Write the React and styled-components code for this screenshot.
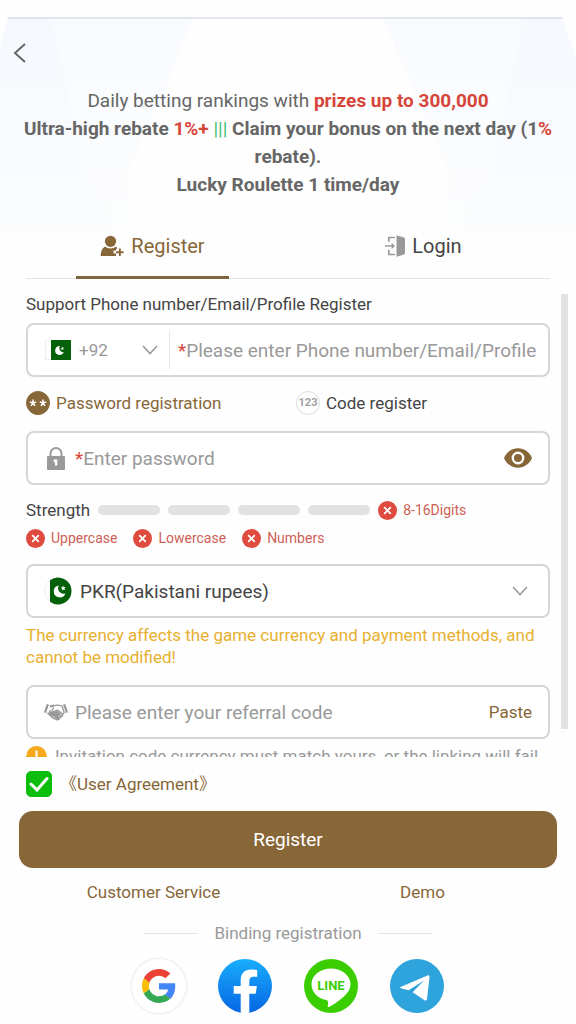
import React, { useState } from 'react';
import styled, { createGlobalStyle } from 'styled-components';

const GlobalStyle = createGlobalStyle`
  * {
    box-sizing: border-box;
  }

  body {
    margin: 0;
    background: #fefefe;
    color: #444;
    font-family: Roboto, "Noto Sans CJK SC", sans-serif;
    font-size: 17px;
  }

  button, input, select {
    font: inherit;
    color: inherit;
    margin: 0;
    padding: 0;
    border: none;
    background: none;
  }

  button, select {
    cursor: pointer;
  }

  svg {
    display: block;
    flex-shrink: 0;
  }
`;

const Page = styled.main`
  position: relative;
  display: flex;
  flex-direction: column;
  height: 100vh;
  padding-top: 18px;
`;

const Backdrop = styled.svg`
  position: absolute;
  top: 17px;
  left: 0;
  width: 100%;
  height: 260px;
  z-index: -1;
`;

const Header = styled.header`
  padding: 24px 12px 16px;
`;

const BackButton = styled.button`
  display: block;
  margin-bottom: 23px;
`;

const Promo = styled.p`
  margin: 0;
  text-align: center;
  font-size: 19px;
  line-height: 28px;
  color: #666;
`;

const Red = styled.span`
  color: #d6453a;
`;

const Green = styled.span`
  font-weight: 400;
  color: #3fbf74;
`;

const Tabs = styled.nav`
  display: flex;
  justify-content: space-between;
  margin: 0 26px;
  padding: 0 50px;
  border-bottom: 1px solid #e6e6e6;
`;

const Tab = styled.button`
  display: flex;
  align-items: center;
  justify-content: center;
  gap: 7px;
  width: 153px;
  height: 64px;
  margin-bottom: -1px;
  font-size: 20px;
  color: ${({ $active }) => ($active ? '#876638' : '#444')};
  border-bottom: 3px solid ${({ $active }) => ($active ? '#7d6540' : 'transparent')};
`;

const ScrollFrame = styled.div`
  position: relative;
  flex: 1;
  min-height: 0;
`;

const ScrollArea = styled.div`
  height: 100%;
  padding: 14px 26px 0;
  overflow-y: auto;
  scrollbar-width: none;
`;

const ScrollThumb = styled.div`
  position: absolute;
  top: 15px;
  right: 8px;
  bottom: 28px;
  width: 7px;
  background: #e2e2e2;
`;

const FieldLabel = styled.label`
  display: block;
  margin-bottom: 8px;
  line-height: 22px;
`;

const Field = styled.div`
  display: flex;
  align-items: center;
  height: 54px;
  padding: 0 16px;
  font-size: 19px;
  background: #fff;
  border: 2px solid #d6d6d6;
  border-radius: 8px;
`;

const AccountField = styled(Field)`
  padding-right: 10px;
`;

const CurrencyField = styled(Field)`
  gap: 8px;
  padding-right: 20px;
  color: #444;
`;

const FieldIcon = styled.span`
  display: flex;
  justify-content: center;
  width: 24px;
  margin-right: 7px;
`;

const TextInput = styled.input`
  flex: 1;
  min-width: 0;
  outline: none;

  &::placeholder {
    color: #999;
    opacity: 1;
  }
`;

const Required = styled.span`
  color: #d6453a;
`;

const CodePicker = styled.div`
  display: flex;
  align-items: center;
  align-self: stretch;
  gap: 8px;
  width: 126px;
  margin: 6px 8px 6px 0;
  padding-left: 1px;
  padding-right: 11px;
  color: #999;
  border-right: 1px solid #e4e4e4;
`;

const PlainSelect = styled.select`
  flex: 1;
  min-width: 0;
  appearance: none;
  outline: none;
  font-size: ${({ $size }) => $size || 19}px;
`;

const Modes = styled.div`
  display: grid;
  grid-template-columns: 1fr 1fr;
  gap: 16px;
  margin: 14px 0 16px;
`;

const ModeLabel = styled.label`
  display: flex;
  align-items: center;
  gap: 6px;
  line-height: 24px;
  color: ${({ $active }) => ($active ? '#876638' : '#444')};
`;

const Stack = styled.span`
  display: grid;
  width: ${({ $size }) => $size}px;
  height: ${({ $size }) => $size}px;

  > * {
    grid-area: 1 / 1;
    place-self: center;
    pointer-events: none;
  }

  > input {
    appearance: none;
    width: 100%;
    height: 100%;
    pointer-events: auto;
  }
`;

const ModeRadio = styled.input`
  border: 1px solid #ddd;
  border-radius: 50%;

  &:checked {
    background: #876638;
    border-color: #876638;
  }
`;

const ModeMark = styled.span`
  font-size: 11px;
  font-weight: 700;
  color: #a0a0a0;
`;

const IconButton = styled.button`
  display: flex;
  color: #876638;
`;

const Strength = styled.div`
  display: flex;
  align-items: center;
  gap: 8px;
  height: 24px;
  margin: 13px 0 6px;
`;

const Bar = styled.span`
  width: 62px;
  height: 10px;
  border-radius: 5px;
  background: #e2e2e2;
`;

const Rules = styled.div`
  display: flex;
  gap: 16px;
  margin-bottom: 16px;
`;

const RuleItem = styled.span`
  display: flex;
  align-items: center;
  gap: 6px;
  font-size: 14px;
  line-height: 20px;
  color: #cf5f55;
`;

const Warning = styled.p`
  margin: 6px 0 17px;
  line-height: 22px;
  color: #e8b030;
`;

const Hint = styled.p`
  display: flex;
  align-items: center;
  gap: 8px;
  margin: 7px 0 0;
  line-height: 20px;
  white-space: nowrap;
  color: #999;
`;

const Paste = styled.button`
  font-size: 17px;
  color: #876638;
`;

const Footer = styled.footer`
  padding: 14px 19px 11px;
`;

const Agreement = styled.div`
  display: flex;
  align-items: center;
  height: 26px;
  padding-left: 7px;
  margin-bottom: 14px;
`;

const AgreeBox = styled.input`
  border: 1px solid #bbb;
  border-radius: 5px;

  &:checked {
    background: #0cbd0c;
    border-color: #0cbd0c;
  }
`;

const TextLink = styled.a`
  color: #876638;
  text-decoration: none;
`;

const AgreementLink = styled(TextLink)`
  margin-left: 8px;
  line-height: 24px;
`;

const Submit = styled.button`
  display: block;
  width: 100%;
  height: 57px;
  font-size: 19px;
  color: #fff;
  background: #876638;
  border-radius: 14px;
`;

const Links = styled.div`
  display: grid;
  grid-template-columns: 1fr 1fr;
  margin: 12px 0 17px;
  line-height: 24px;
  text-align: center;
`;

const Binding = styled.div`
  display: flex;
  align-items: center;
  justify-content: center;
  gap: 16px;
  margin-bottom: 14px;
  line-height: 24px;
  color: #999;

  &::before,
  &::after {
    content: '';
    width: 54px;
    height: 1px;
    background: #e4e4e4;
  }
`;

const Socials = styled.div`
  display: flex;
  justify-content: center;
  gap: 32px;
`;

const SocialButton = styled.button`
  width: 54px;
  height: 54px;
  border-radius: 50%;
  box-shadow: ${({ $shadow }) => ($shadow ? '0 0 3px rgba(0, 0, 0, 0.18)' : 'none')};
`;

const UserPlusIcon = () => (
    <svg width="24" height="22" viewBox="0 0 24 22" fill="currentColor">
        <circle cx="10.5" cy="6.3" r="5.6" />
        <path d="M5 11.5c1.500 1.300 3.300 2 5.500 2s4-.7 5.300-1.900c.9.600 1.300 1.300 1.500 2.100l-1.300.300v1.600h-2.500v3h2.500V21H1.400c-.5 0-.8-.3-.7-.8.300-4.200 1.700-7.200 4.300-8.700z" />
        <path d="M18.900 13.500h1.900v2.800h2.800v1.900h-2.800V21h-1.900v-2.800h-2.800v-1.900h2.800z" />
    </svg>
);

const LoginIcon = () => (
    <svg width="20" height="22" viewBox="0 0 20 22" fill="none" stroke="#999" strokeWidth="1.700">
        <path d="M10 2.500H3.800v4.200M3.800 14.800v4.700H10M0 11h8" />
        <path d="M6.600 7.800L10 11l-3.400 3.200z" fill="#999" stroke="none" />
        <path d="M11.500.3l7 2q1.500.4 1.500 2v13.400q0 1.600-1.500 2l-7 2z" fill="#999" stroke="none" />
    </svg>
);

const ChevronIcon = () => (
    <svg width="16" height="10" viewBox="0 0 16 10" fill="none" stroke="#999" strokeWidth="1.600">
        <path d="M1 1l7 7.500L15 1" />
    </svg>
);

const FlagIcon = () => (
    <svg width="26" height="20" viewBox="0 0 26 20">
        <rect width="26" height="20" fill="#eee" />
        <rect x="1" y="1" width="5" height="18" fill="#fff" />
        <rect x="6" width="20" height="20" fill="#04610a" />
        <path d="M14.800 6a4.500 4.500 0 1 0 4 6.300 4.200 4.200 0 0 1-4-6.300z" fill="#fff" />
        <path d="M17 6.600l.7 1.200 1.400-.2-1 1 .6 1.300-1.300-.6-1 .9.200-1.400-1.200-.7 1.400-.2z" fill="#fff" />
    </svg>
);

const RoundFlagIcon = () => (
    <svg width="28" height="28" viewBox="0 0 28 28">
        <circle cx="14" cy="14" r="13.300" fill="#fff" stroke="#eee" />
        <path d="M6 3.200A13.500 13.500 0 0 1 27.500 14 13.500 13.500 0 0 1 6 24.800z" fill="#04610a" />
        <path d="M14.800 8.500a6 6 0 1 0 6.600 8 5.600 5.600 0 0 1-6.600-8z" fill="#fff" />
        <path d="M19 8.500l.8 1.700 1.900-.2-1.300 1.400.8 1.800-1.800-.8-1.400 1.300.2-2-1.600-1 1.900-.4z" fill="#fff" />
    </svg>
);

const LockIcon = () => (
    <svg width="18" height="23" viewBox="0 0 18 23">
        <path d="M3.500 10V6.500a5.500 5.500 0 0 1 11 0V10" fill="none" stroke="#999" strokeWidth="2" />
        <rect y="9" width="18" height="14" rx="1" fill="#999" />
        <path d="M6.700 12.500h3.600v6H8v-3.300H6.700z" fill="#fff" />
    </svg>
);

const EyeIcon = () => (
    <svg width="28" height="20" viewBox="0 0 28 20">
        <path d="M0 10C2.500 4 8 .3 14 .3S25.500 4 28 10c-2.500 6-8 9.700-14 9.700S2.500 16 0 10z" fill="currentColor" />
        <circle cx="14" cy="10" r="5.200" fill="currentColor" stroke="#fff" strokeWidth="2.400" />
    </svg>
);

const CrossIcon = () => (
    <svg width="19" height="19" viewBox="0 0 19 19">
        <circle cx="9.500" cy="9.500" r="9.500" fill="#e04b40" />
        <path d="M6.200 6.200l6.600 6.600M12.800 6.200l-6.600 6.600" stroke="#fff" strokeWidth="1.800" />
    </svg>
);

const HandshakeIcon = () => (
    <svg width="24" height="18" viewBox="0 0 24 18">
        <path d="M2.700 1l2.200.8L2 10 0 9.200zM21.300 1l-2.200.8L22 10l2-.8z" fill="#999" />
        <path d="M5.800 3l4-.8M3.500 9.800l5.200 5 4 1.800c2 .6 2.700-.3 2.300-1.400" fill="none" stroke="#999" strokeWidth="1.400" />
        <path d="M6.500 3.800c1.600.1 2.600-.3 3.800-1.100 2.200-1.300 4.800-.7 7.700.3l2.200 6.500-1.200 1.700-5.700-4.300-2.800 1.500c-1.500.8-3-.3-2-1.800l1.400-2" fill="none" stroke="#999" strokeWidth="1.300" />
        <path d="M13.200 7.800l5.900 4.300c.6 1.200-.5 2.200-1.600 1.700.3 1.200-.8 1.900-1.900 1.400-.2 1.200-1.200 1.600-2.300 1L6.500 12l-2-2L6 6.500c.7 2.200 2.500 3 4.500 2.400z" fill="#999" />
        <path d="M14.500 12.700l1.700 1.600M15.800 10.800l2.200 2" stroke="#fff" strokeWidth=".6" />
    </svg>
);

const AlertIcon = () => (
    <svg width="21" height="20" viewBox="0 0 21 20">
        <circle cx="10.500" cy="10.300" r="10.300" fill="#f5a81c" />
        <path d="M10.500 4.500v7M10.500 13.500v2" stroke="#fff" strokeWidth="2" />
    </svg>
);

const TickIcon = () => (
    <svg width="20" height="16" viewBox="0 0 20 16" fill="none" stroke="#fff" strokeWidth="3" strokeLinecap="round">
        <path d="M2 8l6 6L18 2.500" />
    </svg>
);

const StarsIcon = () => (
    <svg width="18" height="8" viewBox="0 0 18 8" stroke="#fff" strokeWidth="1.500">
        <path d="M4 4V.5M4 4L.7 2.900M4 4l3.300-1.100M4 4L2 6.900M4 4l2 2.900" />
        <path d="M14 4V.5M14 4l-3.300-1.100M14 4l3.300-1.100M14 4l-2 2.900M14 4l2 2.900" />
    </svg>
);

const GoogleLogo = () => (
    <svg width="54" height="54" viewBox="0 0 54 54">
        <circle cx="27" cy="27" r="27" fill="#fff" />
        <g transform="translate(10 10) scale(.708)">
            <path fill="#EA4335" d="M24 9.500c3.540 0 6.710 1.220 9.210 3.600l6.850-6.850C35.900 2.380 30.470 0 24 0 14.620 0 6.510 5.380 2.560 13.220l7.980 6.190C12.430 13.720 17.740 9.500 24 9.500z" />
            <path fill="#4285F4" d="M46.980 24.550c0-1.570-.15-3.090-.38-4.550H24v9.020h12.940c-.58 2.960-2.260 5.480-4.780 7.180l7.730 6c4.510-4.180 7.090-10.360 7.090-17.650z" />
            <path fill="#FBBC05" d="M10.530 28.590c-.48-1.450-.76-2.990-.76-4.590s.27-3.140.76-4.590l-7.980-6.190C.92 16.460 0 20.120 0 24c0 3.880.92 7.540 2.560 10.780l7.970-6.190z" />
            <path fill="#34A853" d="M24 48c6.480 0 11.930-2.130 15.890-5.810l-7.730-6c-2.150 1.450-4.920 2.300-8.160 2.300-6.260 0-11.570-4.220-13.470-9.910l-7.980 6.190C6.510 42.620 14.620 48 24 48z" />
        </g>
    </svg>
);

const FacebookLogo = () => (
    <svg width="54" height="54" viewBox="0 0 54 54">
        <defs>
            <linearGradient id="fb" x1="0" y1="0" x2="0" y2="1">
                <stop offset="0" stopColor="#19adfc" />
                <stop offset="1" stopColor="#0666e3" />
            </linearGradient>
        </defs>
        <circle cx="27" cy="27" r="27" fill="url(#fb)" />
        <path d="M22.700 53.700V34.800h-7v-7.800h7v-5.700c0-6.900 4.100-10.700 10.400-10.700 3 0 6.100.500 6.100.500v6.700h-3.400c-3.400 0-4.500 2.100-4.500 4.300V27h7.600l-1.200 7.800h-6.400v18.900c-2.900.4-5.700.4-8.600 0z" fill="#fff" />
    </svg>
);

const LineLogo = () => (
    <svg width="54" height="54" viewBox="0 0 54 54">
        <circle cx="27" cy="27" r="27" fill="#3ace01" />
        <path d="M27 9.500c10.800 0 19.500 7 19.500 15.700 0 4-2 7.500-5 10.600-4.300 5-14 11.200-16.200 12.100-2.200.9-1.500-1.300-1.300-2.700.2-1.700.4-3.800-1.800-4.300C13.700 39.600 7.500 33.100 7.500 25.200 7.500 16.500 16.200 9.500 27 9.500z" fill="#fff" />
        <text x="27" y="31" textAnchor="middle" fontFamily="Roboto, sans-serif" fontSize="13" fontWeight="700" fill="#3ace01">LINE</text>
    </svg>
);

const TelegramLogo = () => (
    <svg width="54" height="54" viewBox="0 0 54 54">
        <circle cx="27" cy="27" r="27" fill="#2ea3dc" />
        <path d="M10.500 28L37.500 16.500c1.500-.5 2.300.3 2 2L37 40c-.3 1.600-1.300 2-2.500 1.200L22.600 33.300 34 21.500 18.500 31.300 11 29.300c-.8-.3-1.200-.9-.5-1.300z" fill="#fff" />
    </svg>
);

const rules = ['Uppercase', 'Lowercase', 'Numbers'];

const socials = [
    { name: 'Google', Logo: GoogleLogo, shadow: true },
    { name: 'Facebook', Logo: FacebookLogo },
    { name: 'LINE', Logo: LineLogo },
    { name: 'Telegram', Logo: TelegramLogo },
];

const App = () => {
    const [tab, setTab] = useState('register');
    const [mode, setMode] = useState('password');
    const [showPassword, setShowPassword] = useState(false);
    const [agreed, setAgreed] = useState(true);

    return (
        <Page>
            <GlobalStyle />
            <Backdrop viewBox="0 0 576 260" preserveAspectRatio="none">
                <defs>
                    <linearGradient id="fade" gradientUnits="userSpaceOnUse" x1="0" y1="0" x2="0" y2="250">
                        <stop offset="0" stopColor="#f5f8fd" />
                        <stop offset="0.600" stopColor="#f9fbfe" />
                        <stop offset="1" stopColor="#fefefe" />
                    </linearGradient>
                </defs>
                <path d="M8 1H192L163 76 125 160 140 250H0V30z" fill="url(#fade)" />
                <path d="M383 1H562L576 40V250H436L451 160 415 76z" fill="url(#fade)" />
                <path d="M52 1L64 60 84 150 140 250 125 160 163 76 192 1z" fill="#fff" opacity="0.350" />
                <path d="M524 1L512 60 492 150 436 250 451 160 415 76 383 1z" fill="#fff" opacity="0.350" />
                <path d="M8 1H563" stroke="#e2e4ee" strokeWidth="2" />
            </Backdrop>
            <Header>
                <BackButton aria-label="Back">
                    <svg width="14" height="22" viewBox="0 0 14 22" fill="none" stroke="#666" strokeWidth="2">
                        <path d="M13 2L3 11l10 9" />
                    </svg>
                </BackButton>
                <Promo>
                    Daily betting rankings with <b><Red>prizes up to 300,000</Red></b>
                    <br />
                    <b>
                        Ultra-high rebate <Red>1%+</Red> <Green>|||</Green> Claim your bonus on the next day (1<Red>%</Red> rebate).
                        <br />
                        Lucky Roulette 1 time/day
                    </b>
                </Promo>
            </Header>
            <Tabs>
                <Tab $active={tab === 'register'} onClick={() => setTab('register')}>
                    <UserPlusIcon />
                    Register
                </Tab>
                <Tab $active={tab === 'login'} onClick={() => setTab('login')}>
                    <LoginIcon />
                    Login
                </Tab>
            </Tabs>
            <ScrollFrame>
                <ScrollArea>
                    <FieldLabel htmlFor="account">Support Phone number/Email/Profile Register</FieldLabel>
                    <AccountField>
                        <CodePicker>
                            <FlagIcon />
                            <PlainSelect $size={17} aria-label="Country code">
                                <option>+92</option>
                            </PlainSelect>
                            <ChevronIcon />
                        </CodePicker>
                        <Required>*</Required>
                        <TextInput id="account" placeholder="Please enter Phone number/Email/Profile" />
                    </AccountField>
                    <Modes>
                        <ModeLabel $active={mode === 'password'}>
                            <Stack $size={24}>
                                <ModeRadio type="radio" name="mode" checked={mode === 'password'} onChange={() => setMode('password')} />
                                <StarsIcon />
                            </Stack>
                            Password registration
                        </ModeLabel>
                        <ModeLabel $active={mode === 'code'}>
                            <Stack $size={24}>
                                <ModeRadio type="radio" name="mode" checked={mode === 'code'} onChange={() => setMode('code')} />
                                <ModeMark>123</ModeMark>
                            </Stack>
                            Code register
                        </ModeLabel>
                    </Modes>
                    <Field>
                        <FieldIcon><LockIcon /></FieldIcon>
                        <Required>*</Required>
                        <TextInput
                            type={showPassword ? 'text' : 'password'}
                            aria-label="Password"
                            placeholder="Enter password"
                        />
                        <IconButton aria-label="Show password" onClick={() => setShowPassword(!showPassword)}>
                            <EyeIcon />
                        </IconButton>
                    </Field>
                    <Strength>
                        Strength
                        <Bar />
                        <Bar />
                        <Bar />
                        <Bar />
                        <RuleItem><CrossIcon />8-16Digits</RuleItem>
                    </Strength>
                    <Rules>
                        {rules.map((rule) => (
                            <RuleItem key={rule}><CrossIcon />{rule}</RuleItem>
                        ))}
                    </Rules>
                    <CurrencyField>
                        <RoundFlagIcon />
                        <PlainSelect aria-label="Currency">
                            <option>PKR(Pakistani rupees)</option>
                        </PlainSelect>
                        <ChevronIcon />
                    </CurrencyField>
                    <Warning>The currency affects the game currency and payment methods, and cannot be modified!</Warning>
                    <Field>
                        <FieldIcon><HandshakeIcon /></FieldIcon>
                        <TextInput aria-label="Referral code" placeholder="Please enter your referral code" />
                        <Paste>Paste</Paste>
                    </Field>
                    <Hint>
                        <AlertIcon />
                        Invitation code currency must match yours, or the linking will fail
                    </Hint>
                </ScrollArea>
                <ScrollThumb />
            </ScrollFrame>
            <Footer>
                <Agreement>
                    <Stack $size={26}>
                        <AgreeBox
                            type="checkbox"
                            aria-label="I accept the User Agreement"
                            checked={agreed}
                            onChange={(e) => setAgreed(e.target.checked)}
                        />
                        <TickIcon />
                    </Stack>
                    <AgreementLink href="#agreement">《User Agreement》</AgreementLink>
                </Agreement>
                <Submit>Register</Submit>
                <Links>
                    <TextLink href="#service">Customer Service</TextLink>
                    <TextLink href="#demo">Demo</TextLink>
                </Links>
                <Binding>Binding registration</Binding>
                <Socials>
                    {socials.map(({ name, Logo, shadow }) => (
                        <SocialButton key={name} aria-label={name} $shadow={shadow}>
                            <Logo />
                        </SocialButton>
                    ))}
                </Socials>
            </Footer>
        </Page>
    );
};

export default App;
